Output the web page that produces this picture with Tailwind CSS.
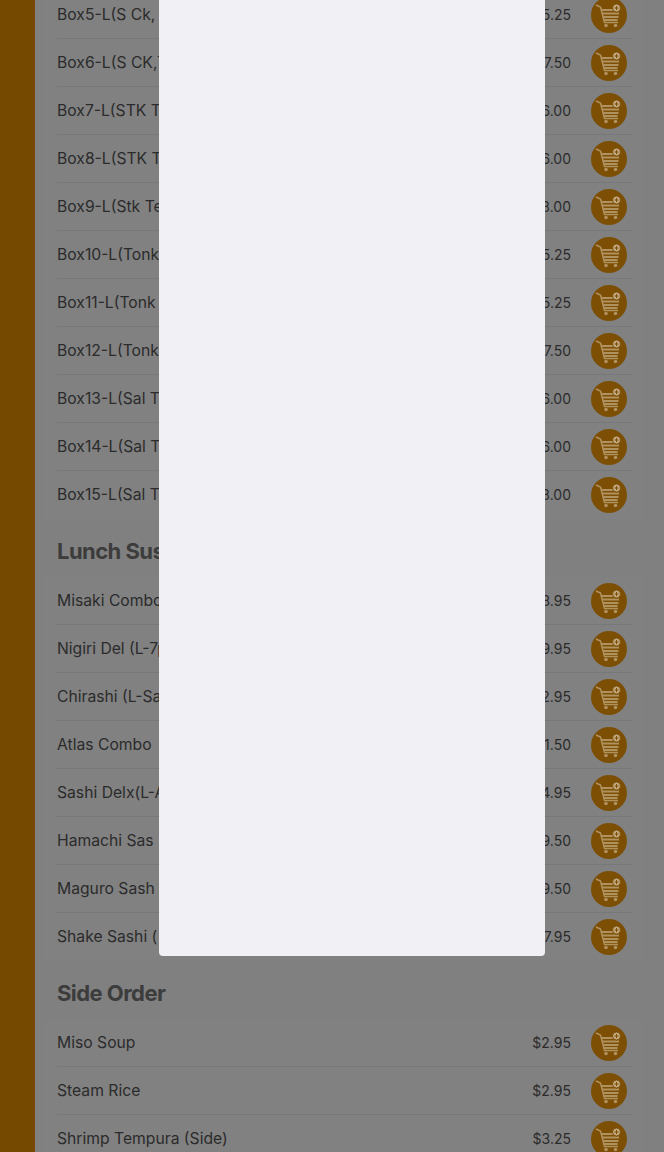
<!DOCTYPE html>
<html lang="en">
<head>
  <meta charset="UTF-8" />
  <meta name="viewport" content="width=device-width, initial-scale=1" />
  <title>Menu</title>
  <script src="https://cdn.jsdelivr.net/npm/@tailwindcss/browser@4"></script>
</head>
<body class="h-[1152px] overflow-hidden bg-[#808080] font-['Inter','Open_Sans',sans-serif] text-[#2b2b2b]">
  <svg class="hidden">
    <symbol id="cart" viewBox="0 0 36 36">
      <g fill="none" stroke="#b0925f">
        <path d="M5 8 L9.5 10 L13.5 25.5 H27" stroke-width="1.5" />
        <path d="M10 13 H29 M11 16.5 H28 M12 20 H27.5 M13 23 H26.5" stroke-width="1.8" />
      </g>
      <circle cx="25.5" cy="11" r="4" fill="#c2a97f" stroke="#7c4f05" />
      <path d="M23.5 11 H27.5 M25.5 9 V13" stroke="#7c4f05" stroke-width="1" />
      <circle cx="15" cy="28.5" r="1.8" fill="#b0925f" />
      <circle cx="24.5" cy="28.5" r="1.8" fill="#b0925f" />
    </symbol>
  </svg>

  <div class="flex h-full">
    <aside class="w-[35px] shrink-0 bg-[#754900]"></aside>

    <main class="w-[608px] pl-2 -mt-[9px]">
      <ul id="boxes" class="bg-[#818181] pl-[14px] pr-[11px]">
        <li class="flex h-12 items-center border-b border-[#787878]"><span class="flex-1 text-[15.7px]">Box5-L(S Ck, T</span><span class="text-sm">$15.25</span><button class="ml-5 mr-[5px] size-9 rounded-full bg-[#7c4f05]"><svg class="size-9"><use href="#cart" /></svg></button></li>
        <li class="flex h-12 items-center border-b border-[#787878]"><span class="flex-1 text-[15.7px]">Box6-L(S CK,T</span><span class="text-sm">$17.50</span><button class="ml-5 mr-[5px] size-9 rounded-full bg-[#7c4f05]"><svg class="size-9"><use href="#cart" /></svg></button></li>
        <li class="flex h-12 items-center border-b border-[#787878]"><span class="flex-1 text-[15.7px]">Box7-L(STK Te</span><span class="text-sm">$16.00</span><button class="ml-5 mr-[5px] size-9 rounded-full bg-[#7c4f05]"><svg class="size-9"><use href="#cart" /></svg></button></li>
        <li class="flex h-12 items-center border-b border-[#787878]"><span class="flex-1 text-[15.7px]">Box8-L(STK Te</span><span class="text-sm">$16.00</span><button class="ml-5 mr-[5px] size-9 rounded-full bg-[#7c4f05]"><svg class="size-9"><use href="#cart" /></svg></button></li>
        <li class="flex h-12 items-center border-b border-[#787878]"><span class="flex-1 text-[15.7px]">Box9-L(Stk Te</span><span class="text-sm">$18.00</span><button class="ml-5 mr-[5px] size-9 rounded-full bg-[#7c4f05]"><svg class="size-9"><use href="#cart" /></svg></button></li>
        <li class="flex h-12 items-center border-b border-[#787878]"><span class="flex-1 text-[15.7px]">Box10-L(Tonk</span><span class="text-sm">$15.25</span><button class="ml-5 mr-[5px] size-9 rounded-full bg-[#7c4f05]"><svg class="size-9"><use href="#cart" /></svg></button></li>
        <li class="flex h-12 items-center border-b border-[#787878]"><span class="flex-1 text-[15.7px]">Box11-L(Tonk</span><span class="text-sm">$15.25</span><button class="ml-5 mr-[5px] size-9 rounded-full bg-[#7c4f05]"><svg class="size-9"><use href="#cart" /></svg></button></li>
        <li class="flex h-12 items-center border-b border-[#787878]"><span class="flex-1 text-[15.7px]">Box12-L(Tonk</span><span class="text-sm">$17.50</span><button class="ml-5 mr-[5px] size-9 rounded-full bg-[#7c4f05]"><svg class="size-9"><use href="#cart" /></svg></button></li>
        <li class="flex h-12 items-center border-b border-[#787878]"><span class="flex-1 text-[15.7px]">Box13-L(Sal T</span><span class="text-sm">$16.00</span><button class="ml-5 mr-[5px] size-9 rounded-full bg-[#7c4f05]"><svg class="size-9"><use href="#cart" /></svg></button></li>
        <li class="flex h-12 items-center border-b border-[#787878]"><span class="flex-1 text-[15.7px]">Box14-L(Sal T</span><span class="text-sm">$16.00</span><button class="ml-5 mr-[5px] size-9 rounded-full bg-[#7c4f05]"><svg class="size-9"><use href="#cart" /></svg></button></li>
        <li class="flex h-12 items-center"><span class="flex-1 text-[15.7px]">Box15-L(Sal T</span><span class="text-sm">$18.00</span><button class="ml-5 mr-[5px] size-9 rounded-full bg-[#7c4f05]"><svg class="size-9"><use href="#cart" /></svg></button></li>
      </ul>

      <h2 class="flex h-[58px] items-center px-[14px] pt-[7px] text-[22px] font-bold tracking-tight text-[#3c3c3c]">Lunch Sus</h2>
      <ul class="bg-[#818181] pl-[14px] pr-[11px]">
        <li class="flex h-12 items-center border-b border-[#787878]"><span class="flex-1 text-[15.7px]">Misaki Combo</span><span class="text-sm">$18.95</span><button class="ml-5 mr-[5px] size-9 rounded-full bg-[#7c4f05]"><svg class="size-9"><use href="#cart" /></svg></button></li>
        <li class="flex h-12 items-center border-b border-[#787878]"><span class="flex-1 text-[15.7px]">Nigiri Del (L-7p</span><span class="text-sm">$19.95</span><button class="ml-5 mr-[5px] size-9 rounded-full bg-[#7c4f05]"><svg class="size-9"><use href="#cart" /></svg></button></li>
        <li class="flex h-12 items-center border-b border-[#787878]"><span class="flex-1 text-[15.7px]">Chirashi (L-Sa</span><span class="text-sm">$22.95</span><button class="ml-5 mr-[5px] size-9 rounded-full bg-[#7c4f05]"><svg class="size-9"><use href="#cart" /></svg></button></li>
        <li class="flex h-12 items-center border-b border-[#787878]"><span class="flex-1 text-[15.7px]">Atlas Combo</span><span class="text-sm">$21.50</span><button class="ml-5 mr-[5px] size-9 rounded-full bg-[#7c4f05]"><svg class="size-9"><use href="#cart" /></svg></button></li>
        <li class="flex h-12 items-center border-b border-[#787878]"><span class="flex-1 text-[15.7px]">Sashi Delx(L-A</span><span class="text-sm">$24.95</span><button class="ml-5 mr-[5px] size-9 rounded-full bg-[#7c4f05]"><svg class="size-9"><use href="#cart" /></svg></button></li>
        <li class="flex h-12 items-center border-b border-[#787878]"><span class="flex-1 text-[15.7px]">Hamachi Sas</span><span class="text-sm">$19.50</span><button class="ml-5 mr-[5px] size-9 rounded-full bg-[#7c4f05]"><svg class="size-9"><use href="#cart" /></svg></button></li>
        <li class="flex h-12 items-center border-b border-[#787878]"><span class="flex-1 text-[15.7px]">Maguro Sash</span><span class="text-sm">$19.50</span><button class="ml-5 mr-[5px] size-9 rounded-full bg-[#7c4f05]"><svg class="size-9"><use href="#cart" /></svg></button></li>
        <li class="flex h-12 items-center"><span class="flex-1 text-[15.7px]">Shake Sashi (</span><span class="text-sm">$17.95</span><button class="ml-5 mr-[5px] size-9 rounded-full bg-[#7c4f05]"><svg class="size-9"><use href="#cart" /></svg></button></li>
      </ul>

      <h2 class="flex h-[58px] items-center px-[14px] pt-[7px] text-[22px] font-bold tracking-tight text-[#3c3c3c]">Side Order</h2>
      <ul class="bg-[#818181] pl-[14px] pr-[11px]">
        <li class="flex h-12 items-center border-b border-[#787878]"><span class="flex-1 text-[15.7px]">Miso Soup</span><span class="text-sm">$2.95</span><button class="ml-5 mr-[5px] size-9 rounded-full bg-[#7c4f05]"><svg class="size-9"><use href="#cart" /></svg></button></li>
        <li class="flex h-12 items-center border-b border-[#787878]"><span class="flex-1 text-[15.7px]">Steam Rice</span><span class="text-sm">$2.95</span><button class="ml-5 mr-[5px] size-9 rounded-full bg-[#7c4f05]"><svg class="size-9"><use href="#cart" /></svg></button></li>
        <li class="flex h-12 items-center"><span class="flex-1 text-[15.7px]">Shrimp Tempura (Side)</span><span class="text-sm">$3.25</span><button class="ml-5 mr-[5px] size-9 rounded-full bg-[#7c4f05]"><svg class="size-9"><use href="#cart" /></svg></button></li>
      </ul>
    </main>
  </div>

  <!-- modal sits over the dimmed menu, its content not loaded yet -->
  <div class="absolute left-[159px] top-0 h-[956px] w-[386px] rounded-b bg-[#f0f0f5]"></div>
</body>
</html>
